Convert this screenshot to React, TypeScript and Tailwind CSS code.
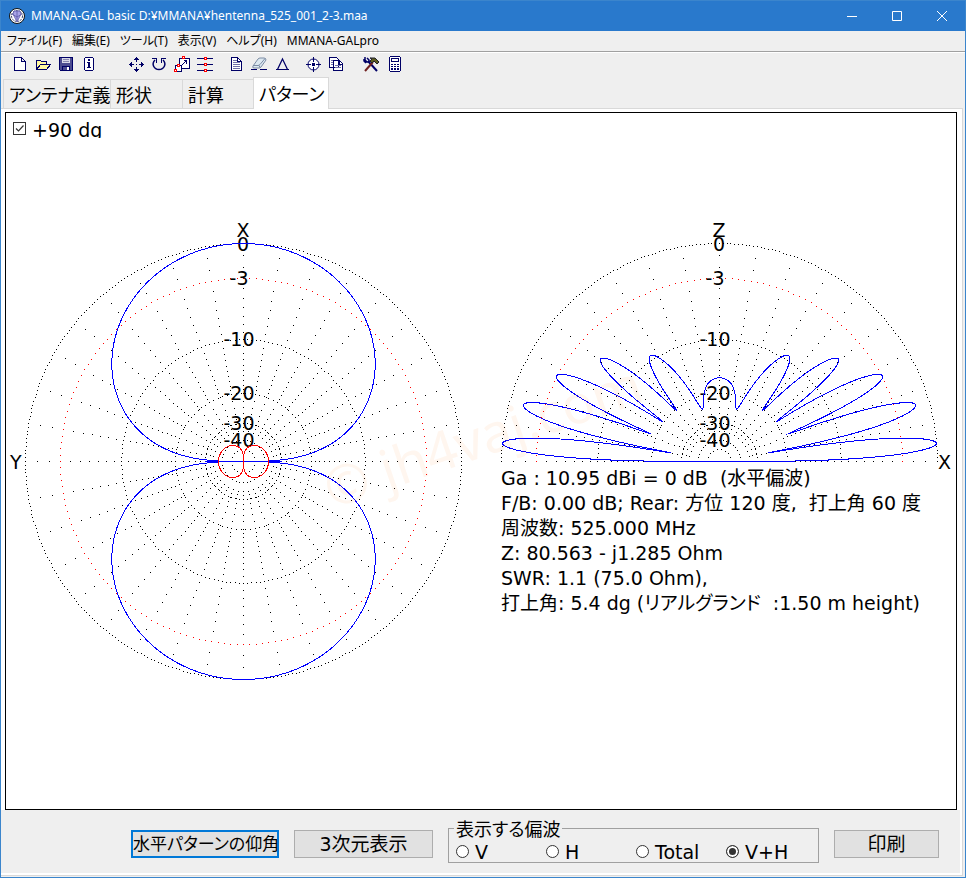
import { useState } from 'react'
import type { ReactNode } from 'react'
import clsx from 'clsx'

const RADIUS = 218

type Point = [number, number]

// log scale: every 2 dB shrinks the radius by 0.89
const dbToRadius = (db: number): number => RADIUS * Math.pow(0.89, -db / 2)

const polar = (r: number, deg: number): Point => {
	const a = (deg * Math.PI) / 180
	return [r * Math.cos(a), -r * Math.sin(a)]
}

const toDots = (points: Point[]): string =>
	points.map(([x, y]) => `M${Math.round(x)} ${Math.round(y)}h1v1h-1z`).join('')

const toLine = (points: Point[]): string =>
	'M' + points.map(([x, y]) => `${(x + 0.5).toFixed(2)} ${(y + 0.5).toFixed(2)}`).join('L')

const ring = (db: number, step: number, end: number): Point[] => {
	const points: Point[] = []
	for (let a = 0; a <= end; a += step) points.push(polar(dbToRadius(db), a))
	return points
}

const spokes = (end: number): Point[] => {
	const points: Point[] = []
	for (let a = 0; a <= end; a += 10) {
		for (let db = -1; db >= -34; db -= db > -20 ? 1 : 2) points.push(polar(dbToRadius(db), a))
	}
	return points
}

const rings = [
	{ db: 0, step: 1 },
	{ db: -10, step: 2 },
	{ db: -20, step: 4 },
	{ db: -30, step: 6 },
	{ db: -40, step: 10 },
	{ db: -50, step: 20 },
]

const scaleLabels = [
	{ text: '0', x: 0, y: -210 },
	{ text: '-3', x: -4, y: -176 },
	{ text: '-10', x: -4, y: -115 },
	{ text: '-20', x: -4, y: -61 },
	{ text: '-30', x: -4, y: -31 },
	{ text: '-40', x: -4, y: -14 },
]

const horizontalPattern = (): Point[] => {
	const points: Point[] = []
	for (let a = 0; a <= 360; a += 1) {
		const e = Math.abs(Math.sin((a * Math.PI) / 180))
		points.push(polar(RADIUS * Math.pow(e, 0.55), a))
	}
	return points
}

const crossPattern = (): Point[] => {
	const points: Point[] = []
	for (let a = 0; a <= 360; a += 2) {
		const e = Math.abs(Math.cos((a * Math.PI) / 180))
		points.push(polar(25 * Math.pow(e, 0.44), a))
	}
	return points
}

const lerp = (table: Point[], v: number): number => {
	for (let i = 1; i < table.length; i++) {
		const [x0, y0] = table[i - 1]
		const [x1, y1] = table[i]
		if (v <= x1) return y0 + ((y1 - y0) * (v - x0)) / (x1 - x0)
	}
	return table[table.length - 1][1]
}

// lobes, nulls and phase (in turns) against the sine of the elevation
const lobeRadius: Point[] = [[0, 219], [0.084, 218], [0.281, 204], [0.47, 184], [0.659, 157], [0.845, 126], [1, 96]]
const nullRadius: Point[] = [[0, 0], [0.175, 49], [0.373, 74], [0.575, 69], [0.766, 67], [0.951, 55], [1, 55]]
const phaseTurns: Point[] = [
	[0, 0],
	[0.084, 0.25],
	[0.175, 0.5],
	[0.281, 0.75],
	[0.373, 1],
	[0.47, 1.25],
	[0.575, 1.5],
	[0.659, 1.75],
	[0.766, 2],
	[0.845, 2.25],
	[0.951, 2.5],
	[1, 2.63],
]

const elevationPattern = (): Point[] => {
	const half: Point[] = []
	for (let i = 0; i <= 900; i++) {
		const a = i / 10
		const s = Math.sin((a * Math.PI) / 180)
		const phase = 2 * Math.PI * lerp(phaseTurns, s)
		const t = Math.pow(lerp(lobeRadius, s), 1.976) * Math.sin(phase)
		const n = Math.pow(lerp(nullRadius, s), 1.976) * Math.cos(phase)
		half.push(polar(Math.pow(Math.hypot(t, n), 0.506), a))
	}
	const mirrored = half.map(([x, y]): Point => [-x, y]).reverse()
	return [...half, ...mirrored]
}

const Grid = ({ end }: { end: number }) => (
	<g shapeRendering="crispEdges">
		{rings.map(({ db, step }) => (
			<path key={db} d={toDots(ring(db, step, end))} fill="#000" />
		))}
		<path d={toDots(spokes(end))} fill="#000" />
		<path d={toDots(ring(-3, 2, end))} fill="#f00" />
	</g>
)

const ScaleLabels = ({ top }: { top: string }) => (
	<g fontSize="19" textAnchor="middle" fill="#000">
		<text x="0" y="-224">{top}</text>
		{scaleLabels.map(({ text, x, y }) => (
			<text key={text} x={x} y={y}>{text}</text>
		))}
	</g>
)

const HorizontalChart = () => (
	<svg viewBox="-237 -246 475 492" className="block w-full overflow-visible">
		<Grid end={359} />
		<ScaleLabels top="X" />
		<text x="-233" y="8" fontSize="19">Y</text>
		<g fill="none" shapeRendering="crispEdges">
			<path d={toLine(horizontalPattern())} stroke="#00f" />
			<path d="M-38 0.5h77" stroke="#00f" />
			<path d={toLine(crossPattern())} stroke="#f00" />
		</g>
	</svg>
)

const ElevationChart = () => (
	<svg viewBox="-238 -246 475 251" className="block w-full overflow-visible">
		<Grid end={180} />
		<ScaleLabels top="Z" />
		<text x="219" y="8" fontSize="19">X</text>
		<path d={toLine(elevationPattern())} fill="none" stroke="#00f" shapeRendering="crispEdges" />
	</svg>
)

const results = [
	'Ga : 10.95 dBi = 0 dB  (水平偏波)',
	'F/B: 0.00 dB; Rear: 方位 120 度,  打上角 60 度',
	'周波数: 525.000 MHz',
	'Z: 80.563 - j1.285 Ohm',
	'SWR: 1.1 (75.0 Ohm),',
	'打上角: 5.4 dg (リアルグランド  :1.50 m height)',
]

const Icon = ({ children }: { children: ReactNode }) => (
	<svg viewBox="0 0 16 16" className="size-4" fill="none" stroke="#000066" shapeRendering="crispEdges" aria-hidden="true">
		{children}
	</svg>
)

const tools: { name: string; gap?: string; icon: ReactNode }[] = [
	{
		name: '新規',
		icon: <path d="M2.5 1.5h7l4 4v9h-11zM9.5 1.5v4h4" fill="#fff" />,
	},
	{
		name: '開く',
		icon: (
			<>
				<path d="M1.5 13.5v-9h4l1 1h5v3" fill="#fff8a0" />
				<path d="M1.5 13.5l4-5h10l-4 5z" fill="#fff8a0" />
			</>
		),
	},
	{
		name: '保存',
		icon: (
			<>
				<path d="M1.5 1.5h13v13h-12l-1-1z" fill="#4c4c90" />
				<path d="M4 2h8v5h-8z" fill="#d8d8e8" stroke="none" />
				<path d="M5 3.5h6M5 5.5h6" stroke="#8888b0" />
				<path d="M4.5 14v-4h7v4" />
				<path d="M9 11h2v3h-2z" fill="#fff" stroke="none" />
			</>
		),
	},
	{
		name: '情報',
		icon: (
			<>
				<path d="M3.5 2.5l1-1h7l1 1v11l-1 1h-7l-1-1z" fill="#fff" />
				<path d="M7 3h2v2h-2zM6 6h3v5h1v1h-4v-1h1v-4h-1z" fill="#000066" stroke="none" />
			</>
		),
	},
	{
		name: '移動',
		gap: 'ml-6',
		icon: (
			<>
				<path d="M8.5 1v5M8.5 11v5M1 8.5h5M11 8.5h5" />
				<path d="M8 1h1v1h1v1h1v1h-5v-1h1v-1h1zM8 16h1v-1h1v-1h1v-1h-5v1h1v1h1zM1 8v1h1v1h1v1h1v-5h-1v1h-1v1zM16 8v1h-1v1h-1v1h-1v-5h1v1h1v1z" fill="#000066" stroke="none" />
				<path d="M8 8h1v1h-1z" fill="#000066" stroke="none" />
			</>
		),
	},
	{
		name: '回転',
		icon: (
			<>
				<path d="M4 4C0 8 3 13.5 8 13.5s8-5.5 4-9.5" strokeWidth="1.5" shapeRendering="auto" />
				<path d="M1 2.5h5M5.5 2v5M10 2.5h5M10.5 2v5" />
			</>
		),
	},
	{
		name: '拡大縮小',
		icon: (
			<>
				<path d="M5.5 2.5h10v10h-10z" fill="#fff" />
				<path d="M1.5 9.5h6v6h-6z" fill="#fff" />
				<path d="M7 10l6-6M9.5 4.5h3v3" />
				<path d="M8.5 .5h2v2h-2zM3.5 8.5h2v2h-2zM.5 13.5h2v2h-2z" fill="#fff" stroke="#f00" />
			</>
		),
	},
	{
		name: 'ワイヤー編集',
		icon: (
			<>
				<path d="M0 2.5h16M0 8.5h16M0 14.5h16" />
				<path d="M7.5 1.5h2v2h-2zM7.5 7.5h2v2h-2zM7.5 13.5h2v2h-2z" fill="#fff" stroke="#f00" />
			</>
		),
	},
	{
		name: '定義テキスト',
		gap: 'ml-2',
		icon: (
			<>
				<path d="M3.5 1.5h6l4 4v9h-10z" fill="#fff" />
				<path d="M9.5 2v3h4" />
				<path d="M5 4.5h4M5 6.5h7M5 8.5h7M5 10.5h7M5 12.5h7" stroke="#7070a8" />
			</>
		),
	},
	{
		name: '消去',
		icon: (
			<g shapeRendering="auto">
				<path d="M2 10l5-7q1-1 2-1h4q2 0 2 2l-5 7q-1 1-2 1h-5q-2 0-1-2z" fill="#dce8f0" stroke="#7c8ca4" />
				<path d="M2 9.5h5q1 0 2-1l5-6M8 9.5l1 2" stroke="#7c8ca4" />
				<path d="M0 13.5h6M9 13.5h7" />
			</g>
		),
	},
	{
		name: '三角',
		icon: <path d="M8.5 3l5 10.5h-10zM2 13.5h13" strokeWidth="1.2" shapeRendering="auto" />,
	},
	{
		name: '中心',
		gap: 'ml-2',
		icon: (
			<>
				<circle cx="8.5" cy="8.5" r="5.5" fill="#fff" shapeRendering="auto" />
				<path d="M8.5 1v5M8.5 11v5M1 8.5h5M11 8.5h5" />
				<path d="M7 7h3v3h-3z" fill="#000066" stroke="none" />
			</>
		),
	},
	{
		name: 'コピー',
		icon: (
			<>
				<path d="M1.5 1.5h7l2 2v8h-9z" fill="#fff" />
				<path d="M3 4.5h4M3 6.5h4M3 8.5h4" stroke="#7070a8" />
				<path d="M5.5 4.5h6l3 3v7h-9z" fill="#fff" />
				<path d="M11.5 5v3h3M5.5 4.5v7h5v-7" />
				<path d="M7 9.5h6M7 11.5h6" stroke="#7070a8" />
			</>
		),
	},
	{
		name: '設定',
		gap: 'ml-3',
		icon: (
			<g shapeRendering="auto">
				<path d="M5 5l9 10" strokeWidth="2" />
				<path d="M10 6l-8 9" stroke="#702020" strokeWidth="2" />
				<path d="M2 1v3l2 2h2v-2l-2-2M1 3v2l2 2" strokeWidth="1.5" />
				<path d="M7 2l5 0 4 4-2 2-3-3-2 2-2-2 2-2z" fill="#5c5c20" stroke="#20202c" />
			</g>
		),
	},
	{
		name: '電卓',
		icon: (
			<>
				<path d="M3.5 1.5l1-1h9l1 1v13l-1 1h-9l-1-1z" fill="#fff" />
				<path d="M5.5 2.5h7v3h-7z" />
				<path d="M5 8h2v1h-2zM8 8h2v1h-2zM11 8h2v1h-2zM5 10h2v1h-2zM8 10h2v1h-2zM11 10h2v1h-2zM5 12h2v2h-2zM8 12h2v2h-2zM11 12h2v2h-2z" fill="#000066" stroke="none" />
			</>
		),
	},
]

const menus = ['ファイル(F)', '編集(E)', 'ツール(T)', '表示(V)', 'ヘルプ(H)', 'MMANA-GALpro']

const tabs = [
	{ title: 'アンテナ定義', width: 'w-[107px]' },
	{ title: '形状', width: 'w-[72px]' },
	{ title: '計算', width: 'w-[71px]' },
	{ title: 'パターン', width: 'w-[76px]' },
]

const polarizations = ['V', 'H', 'Total', 'V+H']

const TitleBar = () => (
	<header className="flex items-center h-[30px] pl-2 bg-[#2979cc] text-white">
		<svg viewBox="0 0 16 16" className="size-4 mr-[6px]" aria-hidden="true">
			<circle cx="8" cy="8" r="7.5" fill="#fff" stroke="#111" />
			<circle cx="8" cy="8" r="5.5" fill="none" stroke="#333a66" strokeDasharray="2 1" />
			<path d="M5 3h6l1 3-4 8-4-8z" fill="#a9a4e6" stroke="#5c58a8" strokeWidth=".8" />
			<path d="M3 6l5 3 5-3M8 3v10" fill="none" stroke="#5c58a8" strokeWidth=".8" />
		</svg>
		<h1 className="flex-1 text-[12px] whitespace-nowrap">MMANA-GAL basic D:¥MMANA¥hentenna_525_001_2-3.maa</h1>
		<div className="flex h-full pr-px">
			{[
				{ name: '最小化', d: 'M0 5.5h10' },
				{ name: '最大化', d: 'M.5 .5h9v9h-9z' },
				{ name: '閉じる', d: 'M0 0l10 10M10 0l-10 10' },
			].map(({ name, d }) => (
				<button key={name} aria-label={name} className="flex items-center justify-center w-[45px] h-full">
					<svg viewBox="0 0 10 10" className="size-[10px] overflow-visible" fill="none" stroke="#fff">
						<path d={d} />
					</svg>
				</button>
			))}
		</div>
	</header>
)

const App = () => {
	const [tab, setTab] = useState('パターン')
	const [rotated, setRotated] = useState(true)
	const [polarization, setPolarization] = useState('V+H')

	return (
		<div className="flex flex-col min-h-screen border border-[#3b85cc] bg-[#efefef] text-black font-['Noto_Sans','Noto_Sans_CJK_JP',sans-serif] [font-feature-settings:'palt']">
			<TitleBar />

			<nav className="flex items-center gap-[10px] h-5 pl-[6px] text-[12px] leading-[18px]">
				{menus.map((menu) => (
					<button key={menu} className="whitespace-nowrap">{menu}</button>
				))}
			</nav>

			<div className="flex items-start h-[26px] pl-[7px] border-t border-[#a0a0a0] shadow-[inset_0_1px_0_#fff]">
				{tools.map(({ name, gap, icon }) => (
					<button key={name} aria-label={name} className={clsx('flex items-center justify-center w-[23px] h-6', gap)}>
						<Icon>{icon}</Icon>
					</button>
				))}
			</div>

			<div role="tablist" className="flex items-end h-[31px] pl-[2px]">
				{tabs.map(({ title, width }) => (
					<button
						key={title}
						role="tab"
						aria-selected={tab === title}
						onClick={() => setTab(title)}
						className={clsx(
							'relative pl-[5px] border-t border-l border-[#d9d9d9] text-left text-[18px] whitespace-nowrap',
							width,
							tab === title ? 'z-10 h-8 -mb-px border-r bg-white leading-[30px]' : 'h-[29px] leading-[30px]',
						)}
					>
						{title}
					</button>
				))}
			</div>

			<main className="flex flex-col flex-1 mr-[2px] mb-px border-t border-r border-b border-[#d9d9d9] bg-white pt-[3px] pb-[2px] font-['DejaVu_Sans','Noto_Sans_CJK_JP',sans-serif]">
				<section className="relative flex-1 ml-1 mr-[5px] border border-black">
					<label className="flex items-start h-[102px] pt-[5px] pl-[7px] text-[19px] leading-[25px]">
						<input
							type="checkbox"
							checked={rotated}
							onChange={() => setRotated(!rotated)}
							className="peer appearance-none size-[13px] mt-1 mr-[6px] border border-[#333] bg-white"
						/>
						<svg viewBox="0 0 13 13" className="absolute left-[7px] top-[9px] size-[13px] hidden peer-checked:block pointer-events-none" fill="none" stroke="#333">
							<path d="M3 6.5l2.5 2.5 5-5.5" strokeWidth="1.2" />
						</svg>
						<span className="h-5 overflow-hidden">+90 dg</span>
					</label>

					<div className="grid grid-cols-2">
						<HorizontalChart />
						<div>
							<ElevationChart />
							<div className="pl-5 text-[19px] leading-[25px] whitespace-pre">
								{results.map((line) => (
									<p key={line}>{line}</p>
								))}
							</div>
						</div>
					</div>

					<svg viewBox="0 0 340 160" className="absolute left-[322px] top-[252px] w-[340px] h-[160px] overflow-visible pointer-events-none">
						<text x="4" y="144" fontSize="54" fill="#ff8020" fillOpacity=".07" transform="rotate(-19 4 144)" className="font-['Noto_Sans']">© jh4vaj.com</text>
					</svg>
				</section>

				<footer className="flex items-start gap-[15px] h-[63px] mr-[2px] pl-[130px] pt-5 bg-[#efefef] text-[19px]">
					<button className="w-[148px] h-7 border-2 border-[#0078d7] bg-[#e1e1e1] text-[17px] leading-6 whitespace-nowrap overflow-hidden">
						水平パターンの仰角
					</button>
					<button className="w-[139px] h-7 border border-[#adadad] bg-[#e1e1e1] leading-[26px] whitespace-nowrap">3次元表示</button>
					<fieldset className="relative flex w-[371px] h-[35px] -mt-[2px] pl-[7px] border border-[#a0a0a0]">
						<legend className="absolute left-[5px] -top-[10px] px-[2px] bg-[#efefef] text-[18px] leading-[22px]">表示する偏波</legend>
						{polarizations.map((name) => (
							<label key={name} className="flex items-center w-[90px] pt-[12px] leading-5">
								<input
									type="radio"
									name="polarization"
									checked={polarization === name}
									onChange={() => setPolarization(name)}
									className="appearance-none size-[13px] mr-[6px] rounded-full border border-[#333] bg-white checked:bg-[#333] checked:shadow-[inset_0_0_0_2px_#fff]"
								/>
								{name}
							</label>
						))}
					</fieldset>
					<button className="w-[105px] h-7 border border-[#adadad] bg-[#e1e1e1] leading-[26px]">印刷</button>
				</footer>
			</main>
		</div>
	)
}

export default App
